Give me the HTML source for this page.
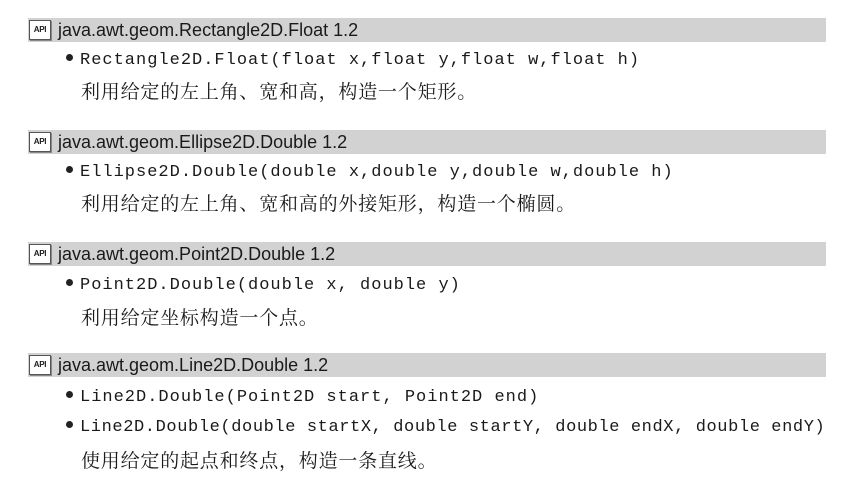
<!DOCTYPE html>
<html><head><meta charset="utf-8"><style>
body{margin:0;width:849px;height:489px;background:#fff;position:relative;overflow:hidden;color:#1a1a1a}
.bar{position:absolute;left:28px;width:798px;height:24px;background:#d2d2d2}
.icon{position:absolute;left:1px;top:2px;width:20px;height:18px;background:#fff;border:1px solid #555;box-shadow:1px 1px 0 #888;font:bold 8px "Liberation Sans",sans-serif;line-height:18px;text-align:center;letter-spacing:-0.3px}
.h{position:absolute;left:30px;top:0;font:18px "Liberation Sans",sans-serif;line-height:24px;letter-spacing:0px}
.code{position:absolute;left:66px;font:17px "Liberation Mono",monospace;letter-spacing:1px;line-height:22px;white-space:pre}
.code b{display:inline-block;width:7px;height:7px;border-radius:50%;background:#222;margin-right:7px;vertical-align:middle;position:relative;top:-2px}
.zh{position:absolute;left:81px;font:19px "Liberation Serif","Noto Serif CJK SC",serif;letter-spacing:0.8px;line-height:24px;white-space:pre}
</style></head><body>
<div class="bar" style="top:18px"><div class="icon">API</div><div class="h">java.awt.geom.Rectangle2D.Float 1.2</div></div>
<div class="code" style="top:50px"><b></b>Rectangle2D.Float(float x,float y,float w,float h)</div>
<div class="zh" style="top:81px">利用给定的左上角、宽和高，构造一个矩形。</div>

<div class="bar" style="top:130px"><div class="icon">API</div><div class="h">java.awt.geom.Ellipse2D.Double 1.2</div></div>
<div class="code" style="top:162px"><b></b>Ellipse2D.Double(double x,double y,double w,double h)</div>
<div class="zh" style="top:193px">利用给定的左上角、宽和高的外接矩形，构造一个椭圆。</div>

<div class="bar" style="top:242px"><div class="icon">API</div><div class="h">java.awt.geom.Point2D.Double 1.2</div></div>
<div class="code" style="top:275px"><b></b>Point2D.Double(double x, double y)</div>
<div class="zh" style="top:307px">利用给定坐标构造一个点。</div>

<div class="bar" style="top:353px"><div class="icon">API</div><div class="h">java.awt.geom.Line2D.Double 1.2</div></div>
<div class="code" style="top:387px"><b></b>Line2D.Double(Point2D start, Point2D end)</div>
<div class="code" style="top:417px;letter-spacing:0.6px"><b></b>Line2D.Double(double startX, double startY, double endX, double endY)</div>
<div class="zh" style="top:450px">使用给定的起点和终点，构造一条直线。</div>
</body></html>
